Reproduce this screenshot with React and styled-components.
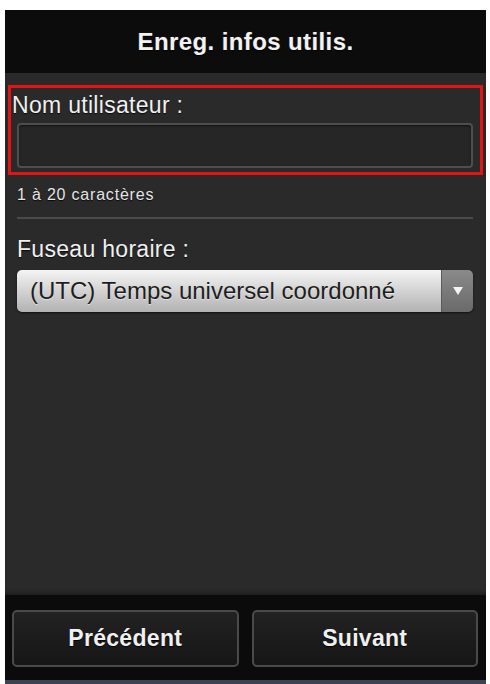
import React from 'react'
import styled, { createGlobalStyle } from 'styled-components'

const Global = createGlobalStyle`
  html, body {
    margin: 0;
    padding: 0;
    background: #ffffff;
  }
  body {
    font-family: "Liberation Sans", Arial, sans-serif;
  }
`

const Screen = styled.div`
  margin: 10px 4px 0 5px;
  width: 481px;
  height: 674px;
  display: flex;
  flex-direction: column;
  background: #2a2a2a;
`

const Header = styled.div`
  height: 63px;
  background: #0c0c0c;
  display: flex;
  align-items: center;
  justify-content: center;
  color: #f2f2f2;
  font-size: 24px;
  font-weight: bold;
  letter-spacing: 0.4px;
  text-shadow: 0 1px 1px rgba(0, 0, 0, 0.9), 0 0 1px rgba(255, 255, 255, 0.3);
`

const Content = styled.div`
  flex: 1;
  display: flex;
  flex-direction: column;
  padding: 12px 3px 0 3px;
  background: #2a2a2a;
  box-shadow: inset 0 -4px 4px -2px rgba(0, 0, 0, 0.35);
`

const Highlight = styled.div`
  border: 3px solid #e31414;
  padding: 4px 7px 4px 1px;
  display: flex;
  flex-direction: column;
`

const Label = styled.div`
  color: #f0f0f0;
  font-size: 23px;
  line-height: 26px;
  letter-spacing: 0.3px;
  text-shadow: 0 1px 1px rgba(0, 0, 0, 0.8);
`

const TextInput = styled.div`
  margin: 5px 0 0 5px;
  height: 41px;
  border: 2px solid #4e4e4e;
  border-radius: 4px;
  background: #262626;
  box-shadow: inset 0 1px 2px rgba(0, 0, 0, 0.6);
`

const Hint = styled.div`
  margin: 10px 0 0 9px;
  color: #e6e6e6;
  font-size: 16px;
  line-height: 20px;
  letter-spacing: 0.8px;
  text-shadow: 0 1px 1px rgba(0, 0, 0, 0.8);
`

const Separator = styled.div`
  margin: 12px 10px 0 9px;
  height: 2px;
  background: #4a4a4a;
`

const Section = styled.div`
  margin-top: 17px;
  padding: 0 10px 0 9px;
  display: flex;
  flex-direction: column;
`

const Select = styled.div`
  margin-top: 8px;
  height: 42px;
  display: flex;
  border-radius: 5px;
  overflow: hidden;
  box-shadow: 0 1px 2px rgba(0, 0, 0, 0.6);
`

const SelectValue = styled.div`
  flex: 1;
  display: flex;
  align-items: center;
  padding-left: 13px;
  font-size: 24px;
  color: #1e1e1e;
  background: linear-gradient(#f4f4f4 0%, #d6d6d6 45%, #b2b2b2 100%);
  text-shadow: 0 1px 0 rgba(255, 255, 255, 0.5);
`

const SelectArrow = styled.div`
  width: 31px;
  display: flex;
  align-items: center;
  justify-content: center;
  background: linear-gradient(#8a8a8a, #6a6a6a);
  border-left: 1px solid #5a5a5a;
`

const Footer = styled.div`
  height: 85px;
  background: #0b0b0b;
  display: flex;
  gap: 13px;
  padding: 15px 8px 0 7px;
  box-sizing: border-box;
`

const FooterButton = styled.div`
  flex: 1;
  height: 57px;
  display: flex;
  align-items: center;
  justify-content: center;
  box-sizing: border-box;
  border: 2px solid #4a4a4a;
  border-radius: 5px;
  background: linear-gradient(#222222, #161616);
  color: #f0f0f0;
  font-size: 23px;
  font-weight: bold;
  letter-spacing: 0.3px;
  text-shadow: 0 1px 1px rgba(0, 0, 0, 0.9);
`

const BottomEdge = styled.div`
  height: 4px;
  background: #3b4351;
`

export default function App() {
  return (
    <>
      <Global />
      <Screen>
        <Header>Enreg. infos utilis.</Header>
        <Content>
          <Highlight>
            <Label>Nom utilisateur :</Label>
            <TextInput />
          </Highlight>
          <Hint>1 à 20 caractères</Hint>
          <Separator />
          <Section>
            <Label>Fuseau horaire :</Label>
            <Select>
              <SelectValue>(UTC) Temps universel coordonné</SelectValue>
              <SelectArrow>
                <svg width="12" height="10" viewBox="0 0 12 10">
                  <path d="M1 1 L11 1 L6 9 Z" fill="#f4f4f4" />
                </svg>
              </SelectArrow>
            </Select>
          </Section>
        </Content>
        <Footer>
          <FooterButton>Précédent</FooterButton>
          <FooterButton>Suivant</FooterButton>
        </Footer>
        <BottomEdge />
      </Screen>
    </>
  )
}
